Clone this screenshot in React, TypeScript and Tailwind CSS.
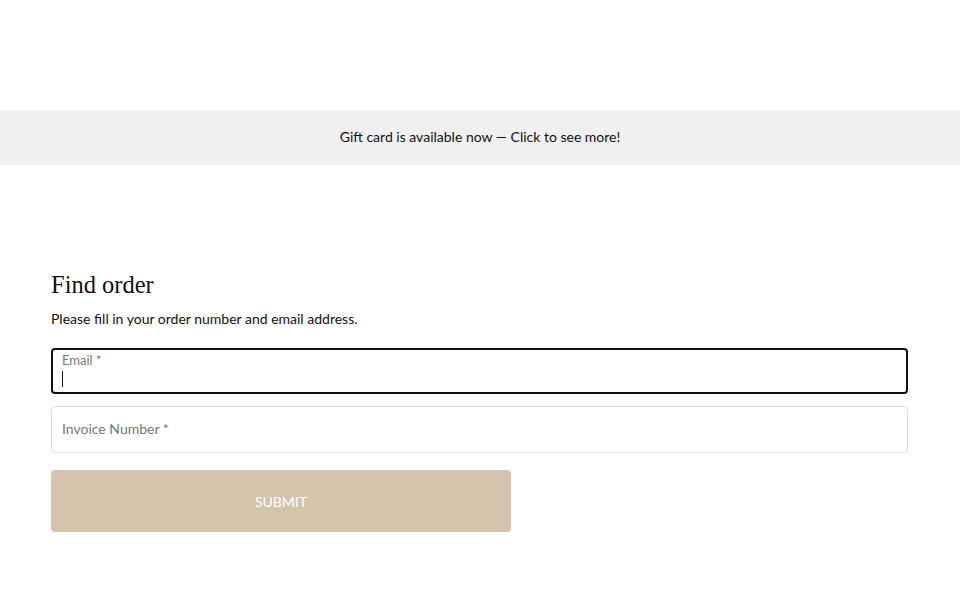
export default function App() {
  return (
    <div className="min-h-[600px] bg-white font-['Lato','Liberation_Sans',sans-serif] text-[#111]">
      <header className="h-[110px]" />
      <a
        href="#"
        className="flex h-[55px] items-center justify-center bg-[#f0f0f0] pb-[2px] text-[14px] text-[#111]"
      >
        Gift card is available now — Click to see more!
      </a>

      <main className="px-[51px] pt-[105px]">
        <h1 className="font-['Liberation_Serif','DejaVu_Serif',serif] text-[24.5px] leading-[30px] text-[#111]">
          Find order
        </h1>
        <p className="mt-[9px] text-[14px] leading-[20px]">
          Please fill in your order number and email address.
        </p>

        <form className="mt-[19px] flex flex-col">
          <div className="flex h-[46px] w-[857px] flex-col rounded-[4px] border-2 border-[#111] px-[9px] pt-[2px]">
            <span className="text-[13px] leading-[17px] text-[#777]">Email *</span>
            <span className="mt-[2px] h-[16px] w-px bg-[#111]" />
          </div>

          <div className="mt-[12px] flex h-[47px] w-[857px] items-center rounded-[4px] border border-[#dddddd] px-[10px] pb-[3px]">
            <span className="text-[14px] text-[#777]">Invoice Number *</span>
          </div>

          <button
            type="button"
            className="mt-[17px] h-[62px] w-[460px] rounded-[4px] bg-[#d4c4ab] text-[14px] text-white"
          >
            SUBMIT
          </button>
        </form>
      </main>
    </div>
  );
}
